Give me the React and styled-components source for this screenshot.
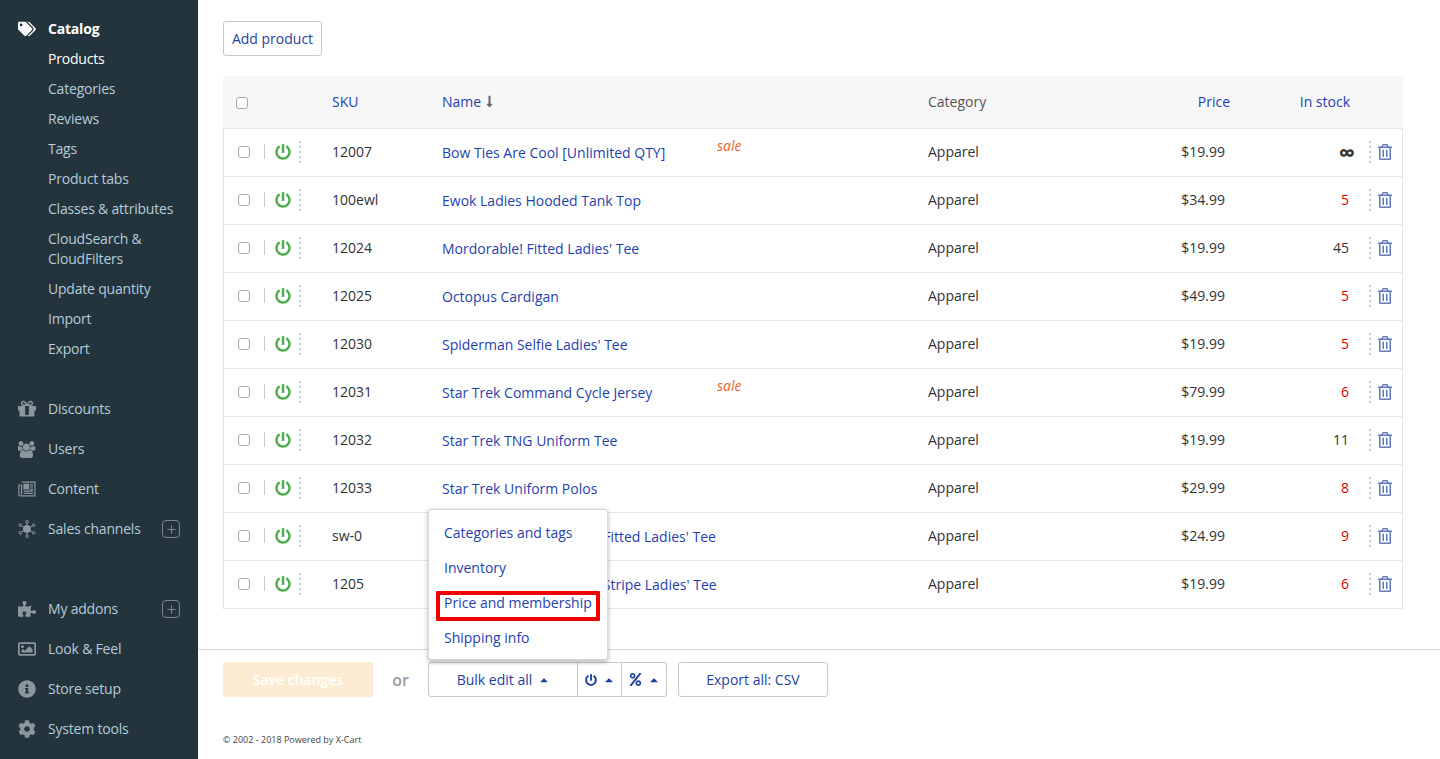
import React from 'react';
import styled, { createGlobalStyle } from 'styled-components';
import {
  FaTags, FaPuzzlePiece, FaRegImage, FaInfoCircle, FaCog,
  FaRegTrashAlt, FaPercent, FaCaretUp, FaPowerOff, FaLongArrowAltDown,
} from 'react-icons/fa';
import { FiPlus } from 'react-icons/fi';

const GlobalStyle = createGlobalStyle`
  html, body {
    margin: 0;
    padding: 0;
    height: 100%;
    overflow: hidden;
    background: #fff;
    font-family: "Open Sans", "Liberation Sans", sans-serif;
    font-size: 14px;
    color: #333;
  }
`;

const Page = styled.div`
  display: flex;
  width: 1440px;
  height: 759px;
  overflow: hidden;
`;

const Sidebar = styled.nav`
  width: 198px;
  flex: none;
  background: #24343c;
  padding-top: 14px;
  box-sizing: border-box;
  letter-spacing: -0.2px;
`;

const MenuGroup = styled.div`
  margin-bottom: ${(p) => p.$gap || 0}px;
`;

const MenuRow = styled.div`
  display: flex;
  align-items: center;
  height: ${(p) => (p.$compact ? 30 : 40)}px;
  padding-left: 18px;
  position: relative;
`;

const MenuIcon = styled.span`
  width: 30px;
  display: flex;
  justify-content: flex-start;
  color: ${(p) => (p.$active ? '#fff' : '#8b979d')};
  font-size: 18px;
`;

const MenuLabel = styled.span`
  color: ${(p) => (p.$active ? '#fff' : '#b4cbd9')};
  font-weight: ${(p) => (p.$bold ? 700 : 400)};
  padding-bottom: 2px;
`;

const PlusBox = styled.span`
  position: absolute;
  left: 162px;
  top: 50%;
  margin-top: -9px;
  width: 16px;
  height: 16px;
  border: 1px solid #7b878d;
  border-radius: 4px;
  display: flex;
  align-items: center;
  justify-content: center;
  color: #7b878d;
  font-size: 13px;
`;

const SubMenu = styled.div`
  padding-left: 48px;
`;

const SubItem = styled.div`
  line-height: 20px;
  padding: 5px 0;
  color: ${(p) => (p.$active ? '#fff' : '#b4cbd9')};
`;

const Main = styled.main`
  flex: 1;
  display: flex;
  flex-direction: column;
  min-width: 0;
`;

const Content = styled.div`
  padding: 21px 37px 0 25px;
  height: 649px;
  box-sizing: border-box;
`;

const AddButton = styled.button`
  display: block;
  height: 35px;
  width: 99px;
  padding: 0;
  background: #fff;
  border: 1px solid #c8c8c8;
  border-radius: 3px;
  color: #1f3f9f;
  font: inherit;
`;

const Table = styled.div`
  margin-top: 20px;
  width: 1180px;
`;

const grid = `
  display: grid;
  grid-template-columns: 40px 68px 110px 486px 172px 125px 124px 1fr;
  align-items: center;
`;

const HeadRow = styled.div`
  ${grid}
  height: 52px;
  background: #f7f7f7;
  padding: 0 1px 2px;
  box-sizing: border-box;
`;

const Body = styled.div`
  border: 1px solid #e6e6e6;
`;

const Row = styled.div`
  ${grid}
  height: 48px;
  box-sizing: border-box;
  border-top: 1px solid #e6e6e6;
  padding-bottom: 2px;
  &:first-child { border-top: 0; height: 47px; }
`;

const Check = styled.span`
  display: block;
  width: 10px;
  height: 10px;
  border: 1px solid #a8a8a8;
  border-radius: 3px;
  background: #fff;
  margin-left: ${(p) => p.$left}px;
  margin-top: ${(p) => p.$top}px;
`;

const HeadLink = styled.span`
  display: flex;
  align-items: center;
  justify-content: ${(p) => (p.$end ? 'flex-end' : 'flex-start')};
  gap: 2px;
  color: #1f3fb0;
  margin-right: ${(p) => p.$end || 0}px;
`;

const SortArrow = styled(FaLongArrowAltDown)`
  font-size: 13px;
  color: #667;
`;

const HeadText = styled.span`
  color: #555;
`;

const ToggleCell = styled.div`
  display: flex;
  align-items: center;
  height: 24px;
`;

const Divider = styled.span`
  width: 1px;
  height: 15px;
  background: #ccc;
`;

const PowerIcon = styled(FaPowerOff)`
  color: #4caf50;
  font-size: 16px;
  margin-left: 10px;
`;

const Dots = styled.span`
  display: block;
  width: 2px;
  height: 22px;
  background: repeating-linear-gradient(#c6cad2 0 2px, transparent 2px 5px);
  margin-left: ${(p) => p.$left}px;
`;

const NameCell = styled.div`
  position: relative;
  padding-top: 2px;
  color: #1f3fb0;
  white-space: nowrap;
`;

const SaleTag = styled.span`
  position: absolute;
  left: 275px;
  top: -5px;
  color: #e8661e;
  font-style: italic;
  font-size: 14px;
`;

const PriceCell = styled.div`
  text-align: right;
`;

const StockCell = styled.div`
  text-align: right;
  color: ${(p) => (p.$low ? '#e00000' : '#333')};
  ${(p) => p.$inf && 'font-size: 23px; line-height: 20px; font-weight: 700; margin-right: -6px;'}
`;

const ActionCell = styled.div`
  display: flex;
  align-items: center;
  color: #6377b8;
`;

const Trash = styled(FaRegTrashAlt)`
  font-size: 16px;
  margin-left: 6px;
`;

const Footer = styled.div`
  position: relative;
  flex: 1;
  border-top: 1px solid #d8d8d8;
  padding: 12px 0 0 25px;
`;

const ButtonBar = styled.div`
  display: flex;
  align-items: center;
  height: 35px;
`;

const SaveButton = styled.button`
  width: 150px;
  height: 35px;
  padding: 0;
  border: 0;
  border-radius: 3px;
  background: #fdebd3;
  color: #fff;
  font: inherit;
  font-weight: 600;
`;

const OrText = styled.span`
  width: 55px;
  text-align: center;
  color: #9a9a9a;
  font-size: 16px;
  font-weight: 600;
`;

const BulkGroup = styled.div`
  display: flex;
  height: 35px;
  box-sizing: border-box;
  border: 1px solid #c8c8c8;
  border-radius: 3px;
  color: #1f3f9f;
`;

const BulkPart = styled.div`
  display: flex;
  align-items: center;
  justify-content: center;
  gap: 6px;
  width: ${(p) => p.$width}px;
  border-left: ${(p) => (p.$first ? '0' : '1px solid #c8c8c8')};
  box-sizing: border-box;
  font-size: 14px;
  padding-left: ${(p) => (p.$first ? 1 : 0)}px;
`;

const Caret = styled(FaCaretUp)`
  font-size: 12px;
`;

const ExportButton = styled.button`
  width: 150px;
  height: 35px;
  margin-left: 11px;
  padding: 0;
  background: #fff;
  border: 1px solid #c8c8c8;
  border-radius: 3px;
  color: #1f3f9f;
  font: inherit;
`;

const Copyright = styled.div`
  margin-top: 36px;
  font-size: 9px;
  line-height: 14px;
  color: #444;
`;

const Dropdown = styled.div`
  position: absolute;
  left: 230px;
  top: -141px;
  width: 180px;
  height: 151px;
  box-sizing: border-box;
  background: #fff;
  border: 1px solid #d8d8d8;
  border-radius: 3px;
  box-shadow: 0 2px 5px rgba(0, 0, 0, 0.3);
  padding: 5px 0;
`;

const DropItem = styled.div`
  height: 35px;
  line-height: 35px;
  padding-left: 15px;
  color: #1f3fb0;
  white-space: nowrap;
`;

const Highlight = styled.span`
  position: absolute;
  left: 7px;
  top: 81px;
  width: 164px;
  height: 30px;
  box-sizing: border-box;
  border: 4px solid #f00000;
  border-radius: 1px;
`;

const SalesIcon = () => (
  <svg width="18" height="18" viewBox="0 0 18 18" fill="none" stroke="currentColor" strokeWidth="1">
    <circle cx="9" cy="9" r="3.6" fill="currentColor" />
    <path d="M9 2.8V5.5M9 12.5v2.7M3.4 5.8 6 7.3M12 10.7l2.6 1.5M3.4 12.2 6 10.7M12 7.3l2.6-1.5" />
    <circle cx="9" cy="1.8" r="1.3" />
    <circle cx="9" cy="16.2" r="1.3" />
    <circle cx="2.3" cy="5.2" r="1.3" />
    <circle cx="15.7" cy="5.2" r="1.3" />
    <circle cx="2.3" cy="12.8" r="1.3" />
    <circle cx="15.7" cy="12.8" r="1.3" />
  </svg>
);

const GiftIcon = () => (
  <svg width="18" height="18" viewBox="128 128 1536 1536" fill="currentColor">
    <path d="M1056 1356v-716h-320v716q0 25 18 38.5t46 13.5h192q28 0 46-13.5t18-38.5zm-456-844h195l-126-161q-26-31-69-31-40 0-68 28t-28 68 28 68 68 28zm688-96q0-40-28-68t-68-28q-43 0-69 31l-125 161h194q40 0 68-28t28-68zm376 256v320q0 14-9 23t-23 9h-96v416q0 40-28 68t-68 28h-1088q-40 0-68-28t-28-68v-416h-96q-14 0-23-9t-9-23v-320q0-14 9-23t23-9h440q-93 0-158.5-65.5t-65.5-158.5 65.5-158.5 158.5-65.5q107 0 168 77l128 165 128-165q61-77 168-77 93 0 158.5 65.5t65.5 158.5-65.5 158.5-158.5 65.5h440q14 0 23 9t9 23z" />
  </svg>
);

const UsersIcon = () => (
  <svg width="18" height="17" viewBox="0 0 1920 1792" fill="currentColor">
    <path d="M529 896q-162 5-265 128h-134q-82 0-138-40.5t-56-118.5q0-353 124-353 6 0 43.5 21t97.5 42.5 119 21.5q67 0 133-23-5 37-5 66 0 139 81 256zm1071 637q0 120-73 189.5t-194 69.5h-874q-121 0-194-69.5t-73-189.5q0-53 3.5-103.5t14-109 26.5-108.5 43-97.5 62-81 85.5-53.5 111.5-20q10 0 43 21.5t73 48 107 48 135 21.5 135-21.5 107-48 73-48 43-21.5q61 0 111.5 20t85.5 53.5 62 81 43 97.5 26.5 108.5 14 109 3.5 103.5zm-1024-1277q0 106-75 181t-181 75-181-75-75-181 75-181 181-75 181 75 75 181zm704 384q0 159-112.5 271.5t-271.5 112.5-271.5-112.5-112.5-271.5 112.5-271.5 271.5-112.5 271.5 112.5 112.5 271.5zm576 225q0 78-56 118.5t-138 40.5h-134q-103-123-265-128 81-117 81-256 0-29-5-66 66 23 133 23 59 0 119-21.5t97.5-42.5 43.5-21q124 0 124 353zm-128-609q0 106-75 181t-181 75-181-75-75-181 75-181 181-75 181 75 75 181z" />
  </svg>
);

const NewsIcon = () => (
  <svg width="18" height="16" viewBox="0 0 18 16" fill="none" stroke="currentColor" strokeWidth="1.2">
    <path d="M3.6 1.1h13.3v13.8H2.4c-.8 0-1.5-.7-1.5-1.5V4h2.7v9.6" />
    <path d="M6 3.4h4.6v4.4H6z" fill="currentColor" />
    <path d="M12 3.8h3M12 6h3M12 8.3h3M5.8 10.2h9.2M5.8 12.4h9.2" />
  </svg>
);

const subItems = [
  'Products', 'Categories', 'Reviews', 'Tags', 'Product tabs', 'Classes & attributes',
  'CloudSearch & CloudFilters', 'Update quantity', 'Import', 'Export',
];

const products = [
  { sku: '12007', name: 'Bow Ties Are Cool [Unlimited QTY]', price: '$19.99', stock: '∞', sale: true },
  { sku: '100ewl', name: 'Ewok Ladies Hooded Tank Top', price: '$34.99', stock: '5', low: true },
  { sku: '12024', name: "Mordorable! Fitted Ladies' Tee", price: '$19.99', stock: '45' },
  { sku: '12025', name: 'Octopus Cardigan', price: '$49.99', stock: '5', low: true },
  { sku: '12030', name: "Spiderman Selfie Ladies' Tee", price: '$19.99', stock: '5', low: true },
  { sku: '12031', name: 'Star Trek Command Cycle Jersey', price: '$79.99', stock: '6', low: true, sale: true },
  { sku: '12032', name: 'Star Trek TNG Uniform Tee', price: '$19.99', stock: '11' },
  { sku: '12033', name: 'Star Trek Uniform Polos', price: '$29.99', stock: '8', low: true },
  { sku: 'sw-0', name: "Star Wars Intergalactical Fitted Ladies' Tee", price: '$24.99', stock: '9', low: true },
  { sku: '1205', name: "Superman Classics Logo Stripe Ladies' Tee", price: '$19.99', stock: '6', low: true },
];

const App = () => (
  <Page>
    <GlobalStyle />
    <Sidebar>
      <MenuGroup $gap={25}>
        <MenuRow $compact>
          <MenuIcon $active><FaTags /></MenuIcon>
          <MenuLabel $active $bold>Catalog</MenuLabel>
        </MenuRow>
        <SubMenu>
          {subItems.map((item, i) => (
            <SubItem key={item} $active={i === 0}>{item}</SubItem>
          ))}
        </SubMenu>
      </MenuGroup>
      <MenuGroup $gap={40}>
        <MenuRow><MenuIcon><GiftIcon /></MenuIcon><MenuLabel>Discounts</MenuLabel></MenuRow>
        <MenuRow><MenuIcon><UsersIcon /></MenuIcon><MenuLabel>Users</MenuLabel></MenuRow>
        <MenuRow><MenuIcon><NewsIcon /></MenuIcon><MenuLabel>Content</MenuLabel></MenuRow>
        <MenuRow>
          <MenuIcon><SalesIcon /></MenuIcon>
          <MenuLabel>Sales channels</MenuLabel>
          <PlusBox><FiPlus /></PlusBox>
        </MenuRow>
      </MenuGroup>
      <MenuGroup>
        <MenuRow>
          <MenuIcon><FaPuzzlePiece /></MenuIcon>
          <MenuLabel>My addons</MenuLabel>
          <PlusBox><FiPlus /></PlusBox>
        </MenuRow>
        <MenuRow><MenuIcon><FaRegImage /></MenuIcon><MenuLabel>Look &amp; Feel</MenuLabel></MenuRow>
        <MenuRow><MenuIcon><FaInfoCircle /></MenuIcon><MenuLabel>Store setup</MenuLabel></MenuRow>
        <MenuRow><MenuIcon><FaCog /></MenuIcon><MenuLabel>System tools</MenuLabel></MenuRow>
      </MenuGroup>
    </Sidebar>
    <Main>
      <Content>
        <AddButton>Add product</AddButton>
        <Table>
          <HeadRow>
            <Check $left={12} $top={4} />
            <span />
            <HeadLink>SKU</HeadLink>
            <HeadLink>Name <SortArrow /></HeadLink>
            <HeadText>Category</HeadText>
            <HeadLink $end={-5}>Price</HeadLink>
            <HeadLink $end={-1}>In stock</HeadLink>
            <span />
          </HeadRow>
          <Body>
            {products.map((p) => (
              <Row key={p.sku}>
                <Check $left={14} $top={1} />
                <ToggleCell>
                  <Divider />
                  <PowerIcon />
                  <Dots $left={8} />
                </ToggleCell>
                <span>{p.sku}</span>
                <NameCell>
                  {p.name}
                  {p.sale && <SaleTag>sale</SaleTag>}
                </NameCell>
                <span>Apparel</span>
                <PriceCell>{p.price}</PriceCell>
                <StockCell $low={p.low} $inf={p.stock === '∞'}>{p.stock}</StockCell>
                <ActionCell>
                  <Dots $left={20} />
                  <Trash />
                </ActionCell>
              </Row>
            ))}
          </Body>
        </Table>
      </Content>
      <Footer>
        <Dropdown>
          <DropItem>Categories and tags</DropItem>
          <DropItem>Inventory</DropItem>
          <DropItem>Price and membership</DropItem>
          <DropItem>Shipping info</DropItem>
          <Highlight />
        </Dropdown>
        <ButtonBar>
          <SaveButton>Save changes</SaveButton>
          <OrText>or</OrText>
          <BulkGroup>
            <BulkPart $first $width={148}>Bulk edit all <Caret /></BulkPart>
            <BulkPart $width={44}><FaPowerOff size={12} /><Caret /></BulkPart>
            <BulkPart $width={45}><FaPercent size={13} /><Caret /></BulkPart>
          </BulkGroup>
          <ExportButton>Export all: CSV</ExportButton>
        </ButtonBar>
        <Copyright>© 2002 - 2018 Powered by X-Cart</Copyright>
      </Footer>
    </Main>
  </Page>
);

export default App;
